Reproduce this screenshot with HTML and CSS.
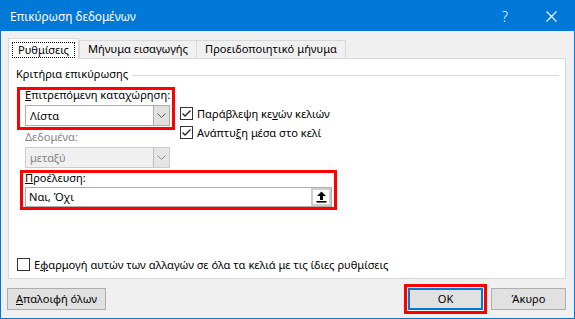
FILE: index.html
```html
<!DOCTYPE html>
<html lang="el">
<head>
<meta charset="utf-8">
<title>Επικύρωση δεδομένων</title>
<link rel="stylesheet" href="styles.css">
</head>
<body>
<div class="window">
  <div class="titlebar">
    <span class="title">Επικύρωση δεδομένων</span>
    <div class="tb-btns">
      <span class="tb-btn help">?</span>
      <span class="tb-btn close"><svg width="11" height="11" viewBox="0 0 11 11"><path d="M0.5 0.5L10.5 10.5M10.5 0.5L0.5 10.5" stroke="#fff" stroke-width="1.1" fill="none"/></svg></span>
    </div>
  </div>
  <div class="body">
    <div class="tabs">
      <div class="tab active"><span class="focus">Ρυθμίσεις</span></div>
      <div class="tab">Μήνυμα εισαγωγής</div>
      <div class="tab">Προειδοποιητικό μήνυμα</div>
    </div>
    <div class="panel">
      <div class="group-head"><span>Κριτήρια επικύρωσης</span><span class="rule"></span></div>
      <div class="criteria">
        <div class="top-row">
          <div class="hl hl-allow">
            <div class="label"><u>Ε</u>πιτρεπόμενη καταχώρηση:</div>
            <div class="select">
              <span class="val">Λίστα</span>
              <span class="drop"><svg width="9" height="5" viewBox="0 0 9 5"><path d="M0.5 0.5L4.5 4.5L8.5 0.5" stroke="#5a5a5a" fill="none"/></svg></span>
            </div>
          </div>
          <div class="checks">
            <div class="check"><span class="box"><svg width="11" height="11" viewBox="0 0 11 11"><path d="M1.5 5.5L4 8L9.5 2.5" stroke="#222" stroke-width="1.3" fill="none"/></svg></span><span>Παράβλεψη κε<u>ν</u>ών κελιών</span></div>
            <div class="check"><span class="box"><svg width="11" height="11" viewBox="0 0 11 11"><path d="M1.5 5.5L4 8L9.5 2.5" stroke="#222" stroke-width="1.3" fill="none"/></svg></span><span>Ανάπτυ<u>ξ</u>η μέσα στο κελί</span></div>
          </div>
        </div>
        <div class="label data-label disabled">Δεδομένα:</div>
        <div class="select data-select disabled">
          <span class="val">μεταξύ</span>
          <span class="drop"><svg width="9" height="5" viewBox="0 0 9 5"><path d="M0.5 0.5L4.5 4.5L8.5 0.5" stroke="#8a8a8a" fill="none"/></svg></span>
        </div>
        <div class="hl hl-source">
          <div class="label"><u>Π</u>ροέλευση:</div>
          <div class="input">
            <span class="val">Ναι, Όχι</span>
            <span class="collapse"><svg width="11" height="12" viewBox="0 0 11 12"><path d="M5.5 0.5L10 5H7V9H4V5H1Z" fill="#000"/><rect x="0.5" y="10" width="10" height="1.6" fill="#000"/></svg></span>
          </div>
        </div>
      </div>
      <div class="check apply"><span class="box"></span><span>Ε<u>φ</u>αρμογή αυτών των αλλαγών σε όλα τα κελιά με τις ίδιες ρυθμίσεις</span></div>
    </div>
    <div class="actions">
      <button class="btn clear"><u>Α</u>παλοιφή όλων</button>
      <span class="spacer"></span>
      <div class="hl hl-ok"><button class="btn default">OK</button></div>
      <button class="btn cancel">Άκυρο</button>
    </div>
  </div>
</div>
</body>
</html>
```

FILE: styles.css
```css
* { box-sizing: border-box; }
body {
  margin: 0;
  font-family: "Noto Sans", "DejaVu Sans", sans-serif;
  font-size: 11.1px;
  color: #000;
}
u { text-decoration-thickness: 1px; text-underline-offset: 1px; }

.window {
  width: 575px;
  height: 319px;
  border: 1px solid #0078d7;
  background: #f0f0f0;
  display: flex;
  flex-direction: column;
}

.titlebar {
  height: 30px;
  flex: none;
  background: #0078d7;
  color: #fff;
  display: flex;
  align-items: center;
}
.title { padding-left: 9px; flex: 1; line-height: 16px; font-size: 11.8px; }
.tb-btns { display: flex; }
.tb-btn {
  width: 46px;
  height: 30px;
  display: flex;
  align-items: center;
  justify-content: center;
}
.help { font-size: 14px; font-weight: 300; padding-top: 1px; }

.body {
  flex: 1;
  display: flex;
  flex-direction: column;
  padding: 7px 8px 4px 7px;
}

.tabs {
  height: 20px;
  display: flex;
  align-items: flex-end;
}
.tab {
  height: 18px;
  border: 1px solid #d9d9d9;
  border-bottom: none;
  background: #f0f0f0;
  line-height: 16px;
  padding: 0 8px;
  white-space: nowrap;
}
.tab + .tab { border-left: none; }
.tab.active {
  height: 21px;
  margin-bottom: -1px;
  position: relative;
  z-index: 1;
  background: #fff;
  padding: 3px 3px 0 3px;
}
.tab.active + .tab { border-left: 1px solid #d9d9d9; }
.focus {
  display: block;
  border: 1px dotted #000;
  line-height: 14px;
  padding: 0 5px;
}

.panel {
  height: 221px;
  flex: none;
  background: #fff;
  border: 1px solid #d9d9d9;
  display: flex;
  flex-direction: column;
  padding: 7px 6px 6px 0;
}

.group-head {
  display: flex;
  align-items: center;
  height: 16px;
  line-height: 16px;
  padding-left: 7px;
}
.rule {
  flex: 1;
  height: 1px;
  background: #dcdcdc;
  margin: 2px 0 0 4px;
}

.criteria {
  margin-top: 5px;
  padding-left: 8px;
  display: flex;
  flex-direction: column;
  align-items: flex-start;
}

.top-row { display: flex; align-items: flex-start; height: 42px; }

.hl { border: 3px solid #ff0000; }
.hl-allow { width: 158px; padding: 0 2px 1px 5px; }
.hl-source { margin: 2px 0 0 3px; padding: 0 2px 0 2px; }
.hl-ok { padding: 1px; display: flex; }

.label { line-height: 14px; margin-top: -2px; white-space: nowrap; }
.disabled { color: #838383; }
.data-label { margin: 1px 0 0 8px; }

.select {
  width: 145px;
  height: 21px;
  margin-top: 3px;
  border: 1px solid #adadad;
  background: #fff;
  display: flex;
  align-items: stretch;
}
.select .val { flex: 1; padding-left: 4px; line-height: 19px; }
.drop {
  width: 16px;
  background: #e1e1e1;
  border-left: 1px solid #adadad;
  display: flex;
  align-items: center;
  justify-content: center;
}
.select.disabled { background: #f0f0f0; border-color: #cccccc; }
.select.disabled .drop { background: #e5e5e5; border-left-color: #bfbfbf; }
.data-select { margin-left: 8px; }

.input {
  width: 307px;
  height: 20px;
  margin-top: 2px;
  border: 1px solid #adadad;
  display: flex;
}
.input .val { flex: 1; padding-left: 3px; line-height: 18px; }
.collapse {
  width: 20px;
  height: 18px;
  border: 2px solid #cfcfcf;
  background: #fff;
  display: flex;
  align-items: center;
  justify-content: center;
}

.checks { margin: 17px 0 0 5px; display: flex; flex-direction: column; }
.check {
  height: 19px;
  display: flex;
  align-items: center;
  gap: 4px;
  white-space: nowrap;
}
.box {
  width: 13px;
  height: 13px;
  flex: none;
  border: 1px solid #333;
  background: #fff;
  display: flex;
  align-items: center;
  justify-content: center;
}
.apply { margin: auto 0 0 8px; height: 16px; }

.actions {
  margin-top: 5px;
  height: 30px;
  display: flex;
  align-items: center;
}
.spacer { flex: 1; }
.btn {
  font: inherit;
  color: #000;
  height: 22px;
  width: 75px;
  padding: 0;
  background: #e1e1e1;
  border: 1px solid #adadad;
  line-height: 18px;
}
.btn.clear { width: 99px; margin-left: -1px; }
.btn.default { border: 2px solid #0078d7; }
.btn.cancel { margin-left: 4px; }
```
